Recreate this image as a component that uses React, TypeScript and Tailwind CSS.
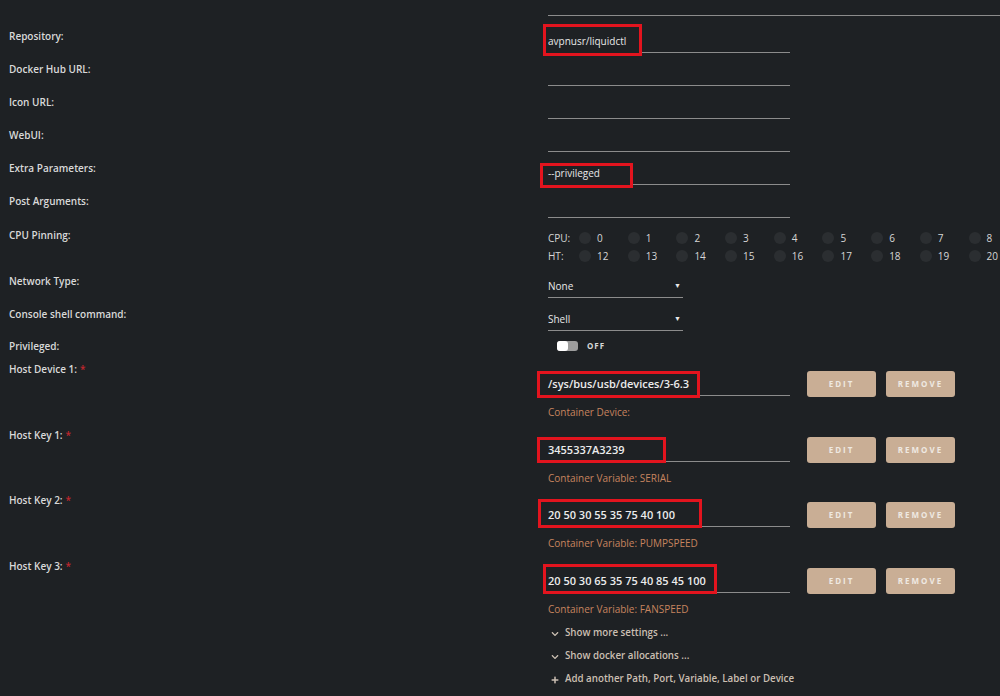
import { FaChevronDown, FaPlus } from "react-icons/fa";

type Box = { l: number; t: number; w: number; h: number };

function Label({ children, req, className = "" }: { children: string; req?: boolean; className?: string }) {
  return (
    <div className={`w-[548px] shrink-0 pl-[9px] font-semibold leading-[12px] text-[#d9d9d9] ${className}`}>
      {children}
      {req && <span className="ml-[3px] text-[#c0262d]">*</span>}
    </div>
  );
}

// red annotation box drawn over a value
function Mark({ box }: { box: Box }) {
  return (
    <span
      className="absolute border-[3px] border-[#e3141e] bg-[#1e2124]"
      style={{ left: box.l, top: box.t, width: box.w, height: box.h }}
    />
  );
}

function TextRow({ label, value, box }: { label: string; value?: string; box?: Box }) {
  return (
    <div className="flex h-[33px]">
      <Label className="pt-[10px]">{label}</Label>
      <div className="relative flex h-[33px] w-[242px] items-end border-b border-[#8c8c8c] pb-[5px]">
        {box && <Mark box={box} />}
        {value && <span className="relative leading-[12px] text-[#e8e8e8]">{value}</span>}
      </div>
    </div>
  );
}

function CpuRow({ name, nums }: { name: string; nums: number[] }) {
  return (
    <div className="flex h-[12px] items-center">
      <div className="w-[31px]">{name}</div>
      {nums.map((n) => (
        <div key={n} className="flex w-[48.7px] shrink-0 items-center">
          <span className="h-[12px] w-[12px] rounded-full bg-[#2b2e31]" />
          <span className="ml-[6px]">{n}</span>
        </div>
      ))}
    </div>
  );
}

function SelectRow({ label, value }: { label: string; value: string }) {
  return (
    <div className="flex h-[33px]">
      <Label className="pt-[10px]">{label}</Label>
      <div className="flex h-[33px] w-[135px] items-end justify-between border-b border-[#8c8c8c] pb-[5px] pr-[2px]">
        <span className="font-medium leading-[12px] text-[#e8e8e8]">{value}</span>
        <span className="text-[7px] leading-[12px] text-[#e8e8e8]">▼</span>
      </div>
    </div>
  );
}

function Btn({ children }: { children: string }) {
  return (
    <div className="flex h-[26px] w-[69px] items-center justify-center rounded-[3px] bg-[#c9ae95] text-[8px] font-bold tracking-[2px] text-[#efe9e2]">
      {children}
    </div>
  );
}

function HostRow({ label, value, note, box, h }: { label: string; value: string; note: string; box: Box; h: string }) {
  return (
    <div className={`flex ${h}`}>
      <Label req className="pt-[7px]">{label}</Label>
      <div className="flex flex-col">
        <div className="relative mt-[15px] flex h-[25px] w-[242px] items-end border-b border-[#8c8c8c] pb-[5px]">
          <Mark box={box} />
          <span className="relative text-[11px] font-semibold leading-[12px] text-[#ececec]">{value}</span>
        </div>
        <div className="mt-[10px] leading-[12px] text-[#c7845f]">{note}</div>
      </div>
      <div className="ml-[17px] mt-[15px] flex gap-[10px]">
        <Btn>EDIT</Btn>
        <Btn>REMOVE</Btn>
      </div>
    </div>
  );
}

function LinkRow({ icon, text }: { icon: "down" | "plus"; text: string }) {
  return (
    <div className="flex h-[23px] items-center gap-[6px] pl-[3px] text-[9.75px] font-semibold text-[#cbbfb2]">
      {icon === "down" ? <FaChevronDown size={8} /> : <FaPlus size={8} />}
      <span>{text}</span>
    </div>
  );
}

export default function App() {
  return (
    <div className="h-[696px] w-[1000px] overflow-hidden bg-[#1e2124] font-['Open_Sans','Noto_Sans',sans-serif] text-[10px] text-[#d6d6d6]">
      <div className="flex h-[20px]">
        <div className="w-[548px] shrink-0" />
        <div className="mt-[15px] h-px flex-1 bg-[#8c8c8c]" />
      </div>

      <TextRow label="Repository:" value="avpnusr/liquidctl" box={{ l: -5, t: 4, w: 99, h: 32 }} />
      <TextRow label="Docker Hub URL:" />
      <TextRow label="Icon URL:" />
      <TextRow label="WebUI:" />
      <TextRow label="Extra Parameters:" value="--privileged" box={{ l: -8, t: 11, w: 93, h: 25 }} />
      <TextRow label="Post Arguments:" />

      <div className="flex h-[47px]">
        <Label className="pt-[11px]">CPU Pinning:</Label>
        <div className="flex flex-col gap-[6px] pt-[14px]">
          <CpuRow name="CPU:" nums={[0, 1, 2, 3, 4, 5, 6, 7, 8]} />
          <CpuRow name="HT:" nums={[12, 13, 14, 15, 16, 17, 18, 19, 20]} />
        </div>
      </div>

      <SelectRow label="Network Type:" value="None" />
      <SelectRow label="Console shell command:" value="Shell" />

      <div className="flex h-[25px]">
        <Label className="pt-[9px]">Privileged:</Label>
        <div className="ml-[9px] mt-[10px] flex h-[10px] items-center">
          <div className="flex h-[10px] w-[21px] rounded-[3px] bg-[#9d9d9d]">
            <span className="h-[10px] w-[11px] rounded-[3px] bg-white" />
          </div>
          <span className="ml-[9px] text-[8px] font-bold tracking-[1px] text-[#d8d8d8]">OFF</span>
        </div>
      </div>

      <HostRow h="h-[66px]" label="Host Device 1:" value="/sys/bus/usb/devices/3-6.3" note="Container Device:" box={{ l: -11, t: 0, w: 163, h: 27 }} />
      <HostRow h="h-[65px]" label="Host Key 1:" value="3455337A3239" note="Container Variable: SERIAL" box={{ l: -11, t: 0, w: 129, h: 26 }} />
      <HostRow h="h-[66px]" label="Host Key 2:" value="20 50 30 55 35 75 40 100" note="Container Variable: PUMPSPEED" box={{ l: -10, t: -3, w: 164, h: 29 }} />
      <HostRow h="h-[65px]" label="Host Key 3:" value="20 50 30 65 35 75 40 85 45 100" note="Container Variable: FANSPEED" box={{ l: -5, t: -4, w: 174, h: 30 }} />

      <div className="flex">
        <div className="w-[548px] shrink-0" />
        <div className="flex flex-col pt-[4px]">
          <LinkRow icon="down" text="Show more settings ..." />
          <LinkRow icon="down" text="Show docker allocations ..." />
          <LinkRow icon="plus" text="Add another Path, Port, Variable, Label or Device" />
        </div>
      </div>
    </div>
  );
}
